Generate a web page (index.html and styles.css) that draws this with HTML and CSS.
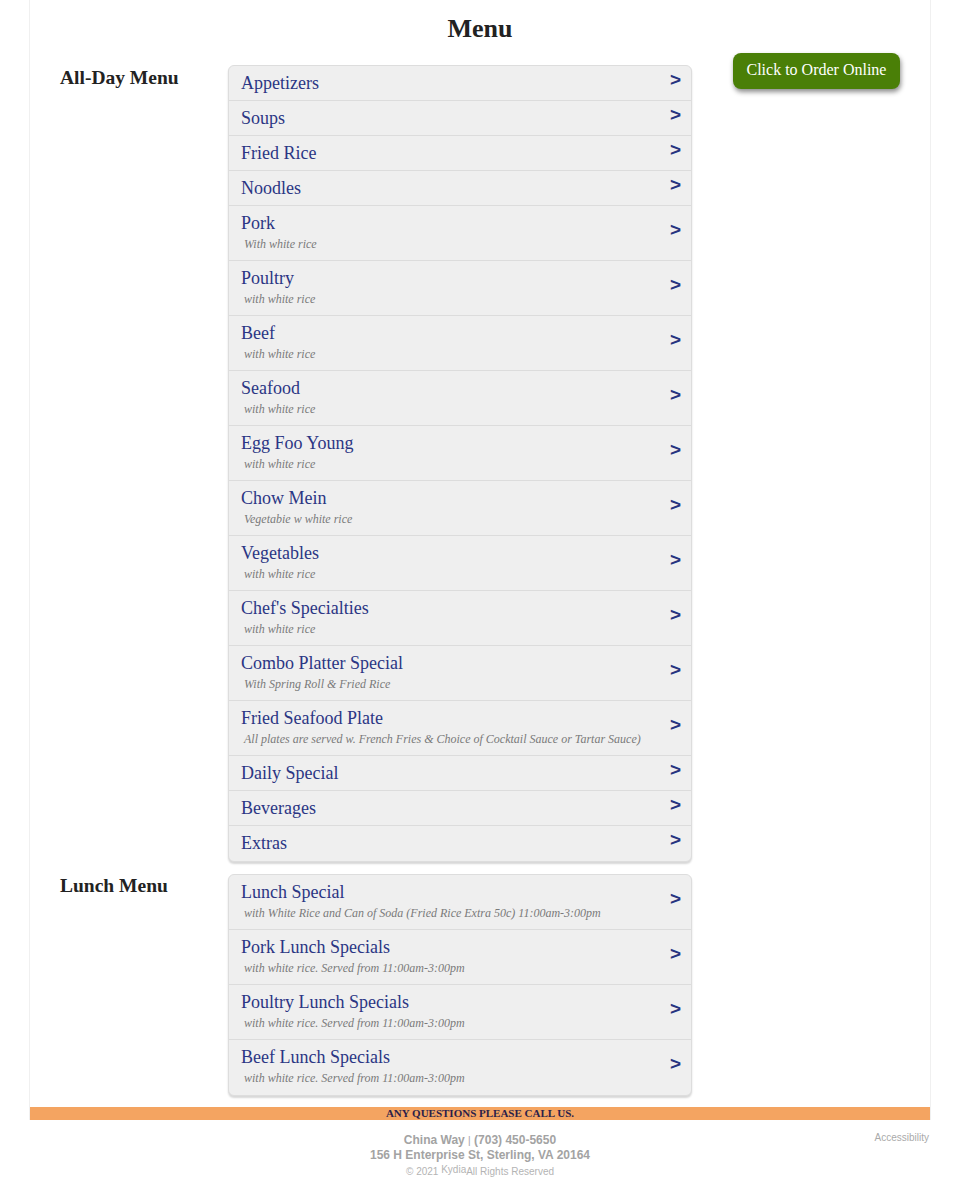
FILE: index.html
```html
<!DOCTYPE html>
<html>
<head>
<meta charset="utf-8">
<title>Menu</title>
<link rel="stylesheet" href="styles.css">
</head>
<body>
<div class="page">
  <h1 class="title">Menu</h1>

  <div class="section">
    <h2 class="section-label">All-Day Menu</h2>
    <ul class="menu-list">
      <li class="row"><div class="row-text"><div class="row-title">Appetizers</div></div><span class="arrow">&gt;</span></li>
      <li class="row"><div class="row-text"><div class="row-title">Soups</div></div><span class="arrow">&gt;</span></li>
      <li class="row"><div class="row-text"><div class="row-title">Fried Rice</div></div><span class="arrow">&gt;</span></li>
      <li class="row"><div class="row-text"><div class="row-title">Noodles</div></div><span class="arrow">&gt;</span></li>
      <li class="row"><div class="row-text"><div class="row-title">Pork</div><div class="row-sub">With white rice</div></div><span class="arrow">&gt;</span></li>
      <li class="row"><div class="row-text"><div class="row-title">Poultry</div><div class="row-sub">with white rice</div></div><span class="arrow">&gt;</span></li>
      <li class="row"><div class="row-text"><div class="row-title">Beef</div><div class="row-sub">with white rice</div></div><span class="arrow">&gt;</span></li>
      <li class="row"><div class="row-text"><div class="row-title">Seafood</div><div class="row-sub">with white rice</div></div><span class="arrow">&gt;</span></li>
      <li class="row"><div class="row-text"><div class="row-title">Egg Foo Young</div><div class="row-sub">with white rice</div></div><span class="arrow">&gt;</span></li>
      <li class="row"><div class="row-text"><div class="row-title">Chow Mein</div><div class="row-sub">Vegetabie w white rice</div></div><span class="arrow">&gt;</span></li>
      <li class="row"><div class="row-text"><div class="row-title">Vegetables</div><div class="row-sub">with white rice</div></div><span class="arrow">&gt;</span></li>
      <li class="row"><div class="row-text"><div class="row-title">Chef's Specialties</div><div class="row-sub">with white rice</div></div><span class="arrow">&gt;</span></li>
      <li class="row"><div class="row-text"><div class="row-title">Combo Platter Special</div><div class="row-sub">With Spring Roll &amp; Fried Rice</div></div><span class="arrow">&gt;</span></li>
      <li class="row"><div class="row-text"><div class="row-title">Fried Seafood Plate</div><div class="row-sub">All plates are served w. French Fries &amp; Choice of Cocktail Sauce or Tartar Sauce)</div></div><span class="arrow">&gt;</span></li>
      <li class="row"><div class="row-text"><div class="row-title">Daily Special</div></div><span class="arrow">&gt;</span></li>
      <li class="row"><div class="row-text"><div class="row-title">Beverages</div></div><span class="arrow">&gt;</span></li>
      <li class="row"><div class="row-text"><div class="row-title">Extras</div></div><span class="arrow">&gt;</span></li>
    </ul>
    <div class="order-col">
      <a class="order-btn" href="#">Click to Order Online</a>
    </div>
  </div>

  <div class="section lunch">
    <h2 class="section-label">Lunch Menu</h2>
    <ul class="menu-list">
      <li class="row"><div class="row-text"><div class="row-title">Lunch Special</div><div class="row-sub">with White Rice and Can of Soda (Fried Rice Extra 50c) 11:00am-3:00pm</div></div><span class="arrow">&gt;</span></li>
      <li class="row"><div class="row-text"><div class="row-title">Pork Lunch Specials</div><div class="row-sub">with white rice. Served from 11:00am-3:00pm</div></div><span class="arrow">&gt;</span></li>
      <li class="row"><div class="row-text"><div class="row-title">Poultry Lunch Specials</div><div class="row-sub">with white rice. Served from 11:00am-3:00pm</div></div><span class="arrow">&gt;</span></li>
      <li class="row"><div class="row-text"><div class="row-title">Beef Lunch Specials</div><div class="row-sub">with white rice. Served from 11:00am-3:00pm</div></div><span class="arrow">&gt;</span></li>
    </ul>
  </div>

  <div class="notice">ANY QUESTIONS PLEASE CALL US.</div>
</div>

<footer class="footer">
  <div></div>
  <div class="footer-center">
    <div class="footer-line"><span>China Way</span> <span class="sep">|</span> <span>(703) 450-5650</span></div>
    <div class="footer-line">156 H Enterprise St, Sterling, VA 20164</div>
    <div class="footer-copy">© 2021 <sup class="brand">Kydia</sup>All Rights Reserved</div>
  </div>
  <div class="footer-right">Accessibility</div>
</footer>
</body>
</html>
```

FILE: styles.css
```css
html, body {
  margin: 0;
  padding: 0;
  background: #ffffff;
}

body {
  font-family: "Liberation Serif", "Times New Roman", serif;
  color: #222222;
}

.page {
  width: 900px;
  margin: 0 auto;
  border-left: 1px solid #f0f0f0;
  border-right: 1px solid #f0f0f0;
}

.title {
  margin: 0;
  padding-top: 14px;
  font-size: 26px;
  line-height: 30px;
  font-weight: bold;
  text-align: center;
  color: #222222;
}

.section {
  display: flex;
  align-items: flex-start;
  padding-left: 30px;
  margin-top: 21px;
}

.section.lunch {
  margin-top: 12px;
}

.section-label {
  width: 168px;
  flex: none;
  margin: 0;
  padding-top: 1px;
  font-size: 19.5px;
  line-height: 24px;
  font-weight: bold;
  color: #222222;
}

.lunch .section-label {
  padding-top: 0;
}

.menu-list {
  list-style: none;
  margin: 0;
  padding: 0;
  width: 462px;
  flex: none;
  background: #efefef;
  border: 1px solid #dddddd;
  border-radius: 6px;
  box-shadow: 0 2px 2px rgba(0, 0, 0, 0.16);
  overflow: hidden;
}

.row {
  display: flex;
  align-items: center;
  justify-content: space-between;
  padding: 7px 10px 7px 12px;
  border-bottom: 1px solid #dcdcdc;
}

.row:last-child {
  border-bottom: none;
  padding-bottom: 8px;
}

.row-text {
  min-width: 0;
}

.row-title {
  font-size: 18px;
  line-height: 20px;
  color: #2b3684;
}

.row-sub {
  margin-top: 3px;
  padding-left: 3px;
  font-size: 12px;
  line-height: 16px;
  font-style: italic;
  color: #7a7a7a;
  padding-bottom: 1px;
}

.arrow {
  font-family: "Liberation Sans", Arial, sans-serif;
  font-weight: bold;
  font-size: 19px;
  line-height: 20px;
  color: #27337f;
  margin-top: -7px;
  flex: none;
}

.order-col {
  margin-left: 41px;
  margin-top: -12px;
}

.order-btn {
  display: inline-block;
  padding: 0 13.5px;
  height: 36px;
  line-height: 34px;
  background: #4a7f07;
  color: #ffffff;
  font-size: 16px;
  text-decoration: none;
  border-radius: 8px;
  box-shadow: 1px 3px 5px rgba(0, 0, 0, 0.45);
}

.notice {
  margin-top: 11px;
  height: 13px;
  line-height: 13px;
  background: #f4a461;
  text-align: center;
  font-size: 11px;
  font-weight: bold;
  color: #2c1f4a;
}

.footer {
  width: 902px;
  margin: 0 auto;
  display: grid;
  grid-template-columns: 1fr auto 1fr;
  padding-top: 13px;
  font-family: "Liberation Sans", Arial, sans-serif;
}

.footer-center {
  text-align: center;
}

.footer-line {
  font-size: 12px;
  line-height: 14px;
  font-weight: bold;
  color: #a3a3a3;
}

.footer-line .sep {
  font-weight: normal;
  font-size: 10px;
}

.footer-copy {
  margin-top: 1px;
  font-size: 10px;
  line-height: 14px;
  color: #b4b4b4;
}

.brand {
  font-size: 10px;
  vertical-align: 2px;
}

.footer-right {
  justify-self: end;
  padding-right: 2px;
  margin-top: -2px;
  font-size: 10px;
  line-height: 14px;
  color: #aaaaaa;
}
```
